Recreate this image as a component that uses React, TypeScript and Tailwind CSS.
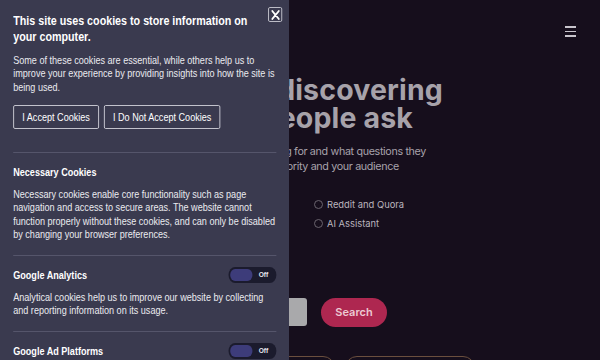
import React from "react";

function Toggle() {
  return (
    <div className="flex items-center w-[58px] h-[16px] rounded-full bg-[#1b1b2d] pl-[1.5px] shrink-0">
      <div className="w-[27px] h-[12px] rounded-full bg-[#3d3c7a]" />
      <span className="ml-[8px] text-[8px] leading-none font-bold text-[#e6e6ee]">Off</span>
    </div>
  );
}

function Section({ title, toggle, children }: { title: string; toggle?: boolean; children: React.ReactNode }) {
  return (
    <div className="border-t border-[#55556b] pt-[11px] pb-[13.5px]">
      <div className="flex items-center justify-between h-[16px]">
        <span className="text-[11px] font-bold text-white">{title}</span>
        {toggle && <Toggle />}
      </div>
      <p className="mt-[8px] text-[11px] leading-[13.33px] text-[#ebebf0]">{children}</p>
    </div>
  );
}

function Radio({ label }: { label: string }) {
  return (
    <label className="flex items-center gap-[4px]">
      <span className="w-[9px] h-[9px] rounded-full border border-[#6a646e]" />
      {label}
    </label>
  );
}

export default function App() {
  return (
    <div className="relative w-[600px] h-[360px] overflow-hidden bg-[#160e1c] font-['Inter',sans-serif]">
      {/* page */}
      <div className="flex justify-end pt-[26px] pr-[24px]">
        <div className="flex flex-col gap-[3px] w-[11px]">
          <div className="h-[1.5px] bg-[#c8c4cc]" />
          <div className="h-[1.5px] bg-[#c8c4cc]" />
          <div className="h-[1.5px] bg-[#c8c4cc]" />
        </div>
      </div>
      <h1 className="mt-[39px] text-[28.5px] leading-[28px] font-bold text-[#a7a2aa] tracking-[0.15px] whitespace-nowrap">
        <div className="w-[443px] text-right">Start discovering</div>
        <div className="w-[413px] text-right">what people ask</div>
      </h1>
      <div className="mt-[12.5px] text-[10.75px] leading-[15px] text-[#a8a2ab] tracking-[-0.35px] whitespace-nowrap">
        <div className="w-[426px] text-right">Find out what people are searching for and what questions they</div>
        <div className="w-[399px] text-right">ask to build authority and your audience</div>
      </div>
      <div className="mt-[21px] flex pl-[150px] text-[9.4px] leading-[19px] text-[#bbb5be]">
        <div className="w-[164px] flex flex-col">
          <Radio label="Google" />
          <Radio label="YouTube" />
        </div>
        <div className="flex flex-col">
          <Radio label="Reddit and Quora" />
          <Radio label="AI Assistant" />
        </div>
      </div>
      <div className="mt-[64.5px] flex items-center">
        <div className="w-[307px] h-[28px] bg-[#a9a9ab] rounded-r-[3px]" />
        <button className="ml-[14px] w-[66px] h-[29px] rounded-full bg-[#ae2750] text-[11px] font-semibold text-[#ecc9d3]">Search</button>
      </div>
      <div className="mt-[29px] flex gap-[10px]">
        <div className="w-[335px] h-[24px] rounded-full border border-[#6b4f3e] shrink-0" />
        <div className="w-[130px] h-[24px] rounded-full border border-[#6b4f3e] shrink-0" />
      </div>

      {/* cookie panel overlay */}
      <div className="absolute left-0 top-0 w-[289px] h-[360px] overflow-hidden bg-[#3a3a4f] font-['Liberation_Sans',Arial,sans-serif]">
        <div className="relative w-[351px] origin-top-left scale-x-[0.825] px-[16px] pt-[13px]">
          <button className="absolute right-[9px] top-[7px] w-[17px] h-[15px] rounded-[2px] border border-[#c9c9d2] flex items-center justify-center">
            <svg width="12" height="10" viewBox="0 0 12 10">
              <path d="M2 1 L10 9 M10 1 L2 9" stroke="#ffffff" strokeWidth="1.8" strokeLinecap="round" />
            </svg>
          </button>
          <div className="pb-[23px]">
            <h2 className="max-w-[295px] text-[13px] leading-[16px] font-bold text-white">
              This site uses cookies to store information on your computer.
            </h2>
            <p className="mt-[9px] text-[11px] leading-[13.33px] text-[#ebebf0]">
              Some of these cookies are essential, while others help us to improve your experience by providing insights into how the site is being used.
            </p>
            <div className="mt-[11px] flex gap-[6px]">
              <button className="h-[24px] px-[10px] border-[1.5px] border-[#d0d0d8] rounded-[2px] text-[11px] text-white">I Accept Cookies</button>
              <button className="h-[24px] px-[10px] border-[1.5px] border-[#d0d0d8] rounded-[2px] text-[11px] text-white">I Do Not Accept Cookies</button>
            </div>
          </div>
          <Section title="Necessary Cookies">
            Necessary cookies enable core functionality such as page navigation and access to secure areas. The website cannot function properly without these cookies, and can only be disabled by changing your browser preferences.
          </Section>
          <Section title="Google Analytics" toggle>
            Analytical cookies help us to improve our website by collecting and reporting information on its usage.
          </Section>
          <Section title="Google Ad Platforms" toggle>
            We use cookies to help us with advertising on Google platforms.
          </Section>
        </div>
      </div>
    </div>
  );
}
